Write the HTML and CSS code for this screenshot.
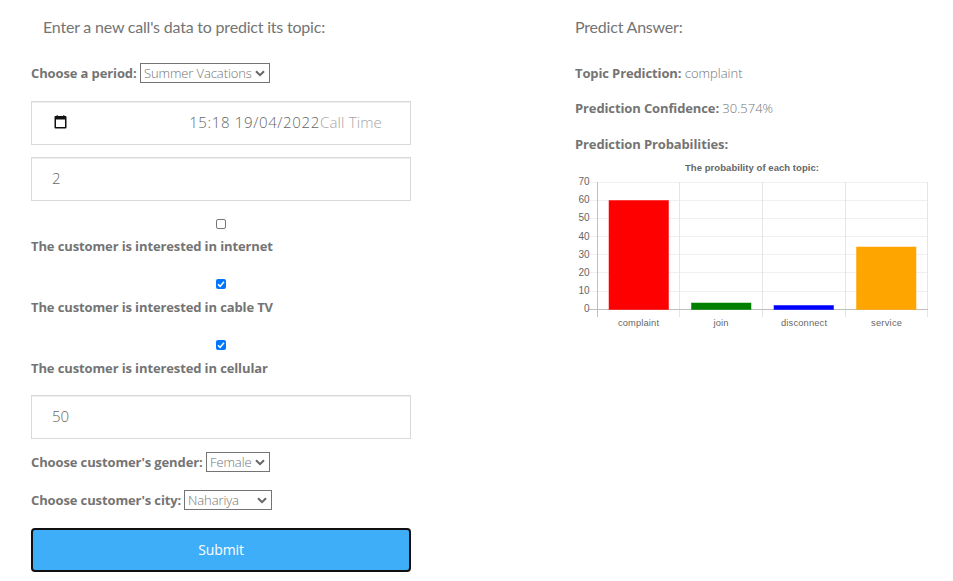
FILE: index.html
```html
<!DOCTYPE html>
<html lang="en">
<head>
<meta charset="utf-8">
<title>Call topic prediction</title>
<link rel="stylesheet" href="styles.css">
</head>
<body>
<main class="page">
  <form class="form">
    <h4 class="title title-form">Enter a new call's data to predict its topic:</h4>
    <div class="row row-period">
      <b class="label-period">Choose a period:</b>
      <div class="select select-period"><span>Summer Vacations</span><svg class="chevron" viewBox="0 0 10 7"><path d="M1 1.2 5 5.2 9 1.2"/></svg></div>
    </div>
    <div class="field field-time">
      <svg class="calendar" viewBox="0 0 13 14"><path class="rings" d="M2.5 0h1.5v2H2.5zM9 0h1.5v2H9z"/><path fill-rule="evenodd" d="M1.5 1h10a1 1 0 0 1 1 1v10.500a1 1 0 0 1-1 1h-10a1 1 0 0 1-1-1V2a1 1 0 0 1 1-1zM2 4.500v7.500h9V4.500z"/></svg>
      <span class="time">15:18 19/04/2022</span><span class="hint">Call Time</span>
    </div>
    <div class="field field-number">2</div>
    <div class="check"><span class="box"></span><b>The customer is interested in internet</b></div>
    <div class="check check-on"><span class="box checked"><svg viewBox="0 0 10 10"><path d="M2 5.300 4.100 7.400 8 2.700"/></svg></span><b>The customer is interested in cable TV</b></div>
    <div class="check check-on"><span class="box checked"><svg viewBox="0 0 10 10"><path d="M2 5.300 4.100 7.400 8 2.700"/></svg></span><b>The customer is interested in cellular</b></div>
    <div class="field field-age">50</div>
    <div class="row row-gender">
      <b class="label-gender">Choose customer's gender:</b>
      <div class="select select-gender"><span>Female</span><svg class="chevron" viewBox="0 0 10 7"><path d="M1 1.2 5 5.2 9 1.2"/></svg></div>
    </div>
    <div class="row row-city">
      <b class="label-city">Choose customer's city:</b>
      <div class="select select-city"><span>Nahariya</span><svg class="chevron" viewBox="0 0 10 7"><path d="M1 1.2 5 5.2 9 1.2"/></svg></div>
    </div>
    <button class="submit" type="button">Submit</button>
  </form>
  <section class="answer">
    <h4 class="title">Predict Answer:</h4>
    <p class="result result-topic"><b>Topic Prediction:</b> complaint</p>
    <p class="result"><b>Prediction Confidence:</b> 30.574%</p>
    <p class="result result-last"><b>Prediction Probabilities:</b></p>
    <svg class="chart" viewBox="570 155 370 180">
      <g class="grid">
        <path d="M588 182.500H928M588 200.500H928M588 218.500H928M588 236.500H928M588 254.500H928M588 272.500H928M588 291.500H928"/>
        <path class="column" d="M679.500 182V317M762.500 182V317M845.500 182V317M927.500 182V317"/>
        <path class="axis" d="M588 309.500H928M597.500 182V317"/>
      </g>
      <g class="bars">
        <rect x="609" y="200.500" width="59.500" height="109" fill="red" stroke="red"/>
        <rect x="691.500" y="303" width="59.500" height="6.500" fill="green" stroke="green"/>
        <rect x="774" y="305.500" width="59.500" height="4" fill="blue" stroke="blue"/>
        <rect x="856.500" y="247" width="59.500" height="62.500" fill="orange" stroke="orange"/>
      </g>
      <text class="chart-title" x="752" y="171" textLength="134">The probability of each topic:</text>
      <g class="ticks">
        <text x="589.500" y="185">70</text><text x="589.500" y="203">60</text><text x="589.500" y="221">50</text><text x="589.500" y="239.500">40</text><text x="589.500" y="257.500">30</text><text x="589.500" y="275.500">20</text><text x="589.500" y="293.500">10</text><text x="589.500" y="312">0</text>
      </g>
      <g class="names">
        <text x="638.500" y="326" textLength="41">complaint</text><text x="721" y="326" textLength="15">join</text><text x="804" y="326" textLength="46">disconnect</text><text x="886.500" y="326" textLength="31">service</text>
      </g>
    </svg>
  </section>
</main>
</body>
</html>
```

FILE: styles.css
```css
* { box-sizing: border-box; }
body {
  margin: 0;
  background: #fff;
  color: #747474;
  font: 300 13px/20px "Open Sans", sans-serif;
}
b { font-weight: 700; letter-spacing: -0.12px; white-space: nowrap; }
.page { display: flex; padding: 15px 0 0 31px; }
.form { display: flex; flex-direction: column; width: 380px; }
.title {
  margin: 0;
  height: 24px;
  font: 400 16px/24px Lato, sans-serif;
  letter-spacing: -0.2px;
  white-space: nowrap;
}
.title-form { padding-left: 12px; }
.row { display: flex; height: 20px; }
.row-period { margin-top: 24px; }
.label-period { width: 109px; }
.label-gender { width: 175px; }
.label-city { width: 153px; }
.select {
  display: flex;
  align-items: center;
  justify-content: space-between;
  height: 20px;
  padding: 0 4px 0 3px;
  border: 1px solid #747474;
  letter-spacing: -0.1px;
  white-space: nowrap;
}
.select-period { width: 130px; }
.select-gender { width: 64px; }
.select-city { width: 88px; }
.chevron { width: 10px; height: 7px; fill: none; stroke: #666; stroke-width: 2; }
.field {
  display: flex;
  align-items: center;
  height: 44px;
  padding: 0 20px 2px;
  border: 1px solid #d9d9d9;
  box-shadow: inset 0 1px 1px #eee;
  color: #666;
  font-size: 15px;
}
.field-time { margin-top: 18px; padding: 0 28px 2px 22px; }
.calendar { width: 13px; height: 14px; margin-right: auto; fill: #111; }
.calendar .rings { fill: #666; }
.time { letter-spacing: 0.65px; }
.hint { color: #a5a5a5; letter-spacing: 0.15px; }
.field-number { margin: 12px 0 18px; }
.check { display: flex; flex-direction: column; height: 61px; }
.box {
  align-self: center;
  width: 10px;
  height: 10px;
  margin: 0 0 7px;
  border: 1px solid #767676;
  border-radius: 2px;
}
.checked { border: 0; background: #0075ff; }
.check-on .box { margin: -1px 0 8px; }
.checked svg { display: block; fill: none; stroke: #fff; stroke-width: 1.6; }
.field-age { margin-top: -7px; }
.row-gender { margin-top: 13px; }
.row-city { margin-top: 18px; }
.submit {
  height: 44px;
  margin-top: 18px;
  border: 2px solid #101010;
  border-radius: 4px;
  background: #3faef8;
  color: #fff;
  font: 400 14px/20px "Open Sans", sans-serif;
  letter-spacing: -0.1px;
}
.answer { width: 370px; margin-left: 164px; }
.result { height: 20px; margin: 0 0 15px; white-space: nowrap; }
.result-topic { margin-top: 24px; }
.result-last { margin: 16px 0 0; }
.chart { display: block; width: 370px; height: 180px; margin: 1px 0 0 -5px; }
.chart text { fill: #666; font-family: "Liberation Sans", Arial, sans-serif; font-size: 9.3px; font-weight: 400; text-anchor: middle; }
.chart .chart-title { font-weight: 700; font-size: 9.500px; }
.chart .ticks text { text-anchor: end; font-size: 10px; }
.grid path { stroke: #f0f0f0; }
.grid .column { stroke: #e5e5e5; }
.grid .axis { stroke: #bfbfbf; }
.bars rect { stroke-opacity: 0.5; }
```
